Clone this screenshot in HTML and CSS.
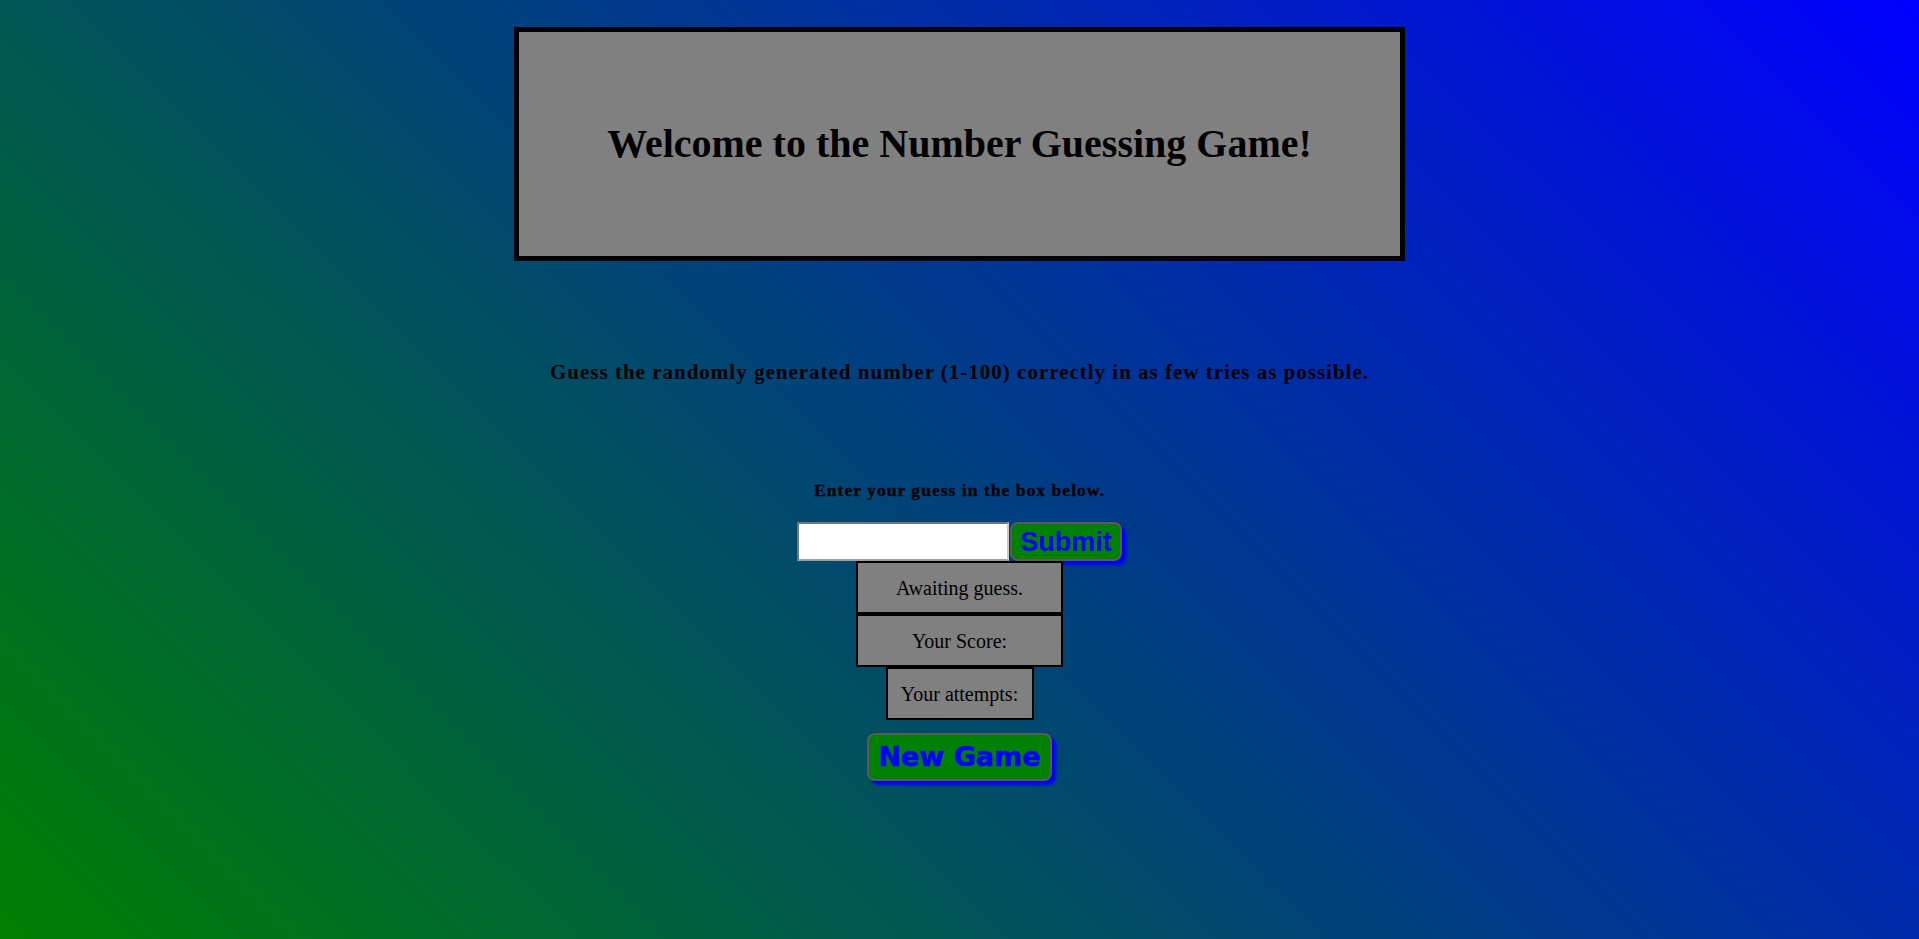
FILE: index.html
```html
<!DOCTYPE html>
<html lang="en">
<head>
<meta charset="utf-8">
<title>Number Guessing Game</title>
<link rel="stylesheet" href="styles.css">
</head>
<body>
<main class="page">
  <div class="header">
    <h1 class="title">Welcome to the Number Guessing Game!</h1>
  </div>
  <p class="intro">Guess the randomly generated number (1-100) correctly in as few tries as possible.</p>
  <p class="prompt">Enter your guess in the box below.</p>
  <div class="guess-row">
    <input class="guess-input" type="text" aria-label="Your guess">
    <button class="btn btn-submit" type="button">Submit</button>
  </div>
  <div class="box box-wide">Awaiting guess.</div>
  <div class="box box-wide">Your Score:</div>
  <div class="box box-narrow">Your attempts:</div>
  <button class="btn btn-new" type="button">New Game</button>
</main>
</body>
</html>
```

FILE: styles.css
```css
html {
  height: 100%;
  background: linear-gradient(45deg, #008000, #0000ff);
  background-attachment: fixed;
}

body {
  margin: 0;
  min-height: 100%;
  font-family: "Liberation Serif", "Times New Roman", serif;
  color: #000;
}

.page {
  display: flex;
  flex-direction: column;
  align-items: center;
  padding-top: 27px;
}

.header {
  width: 891px;
  box-sizing: border-box;
  border: 5px solid #000;
  background: #808080;
  padding: 89px 0;
  text-align: center;
}

.title {
  margin: 0;
  font-size: 40px;
  line-height: 46px;
  font-weight: bold;
}

.intro {
  margin: 99px 0 0;
  font-size: 21px;
  line-height: 24px;
  font-weight: bold;
  letter-spacing: 1px;
  text-align: center;
}

.prompt {
  margin: 96px 0 0;
  font-size: 17.6px;
  line-height: 20px;
  font-weight: bold;
  letter-spacing: 1px;
  -webkit-text-stroke: 0.3px #000;
  text-align: center;
}

.guess-row {
  display: flex;
  align-items: flex-start;
  margin-top: 22px;
  height: 39px;
}

.guess-input {
  width: 212px;
  height: 39px;
  box-sizing: border-box;
  margin: 0;
  border: 2px solid #767676;
  border-right-color: #c8c8c8;
  border-bottom-color: #a0a0a0;
  background: #fff;
  font-size: 20px;
  padding: 0 4px;
}

.btn {
  margin: 0;
  background: #008000;
  color: #0000ff;
  border: 2px solid #5a5a5a;
  border-radius: 8px;
  box-shadow: 4px 4px 3px #0000ff;
  font-weight: bold;
  cursor: pointer;
}

.btn-submit {
  margin-left: 1px;
  height: 39px;
  padding: 0 8px;
  font-family: "Liberation Sans", Arial, sans-serif;
  font-size: 27px;
  line-height: 32px;
}

.box {
  box-sizing: border-box;
  height: 53px;
  border: 2px solid #000;
  background: #808080;
  font-size: 20px;
  line-height: 24px;
  text-align: center;
  padding: 13px 0 0;
}

.box-wide {
  width: 207px;
}

.box-wide:first-of-type {
  margin-top: 1px;
}

.box-narrow {
  width: 148px;
}

.btn-new {
  margin-top: 13px;
  height: 48px;
  padding: 0 9px;
  font-family: "DejaVu Sans", Verdana, sans-serif;
  font-size: 27px;
  line-height: 38px;
  -webkit-text-stroke: 0.6px #0000ff;
}
```
